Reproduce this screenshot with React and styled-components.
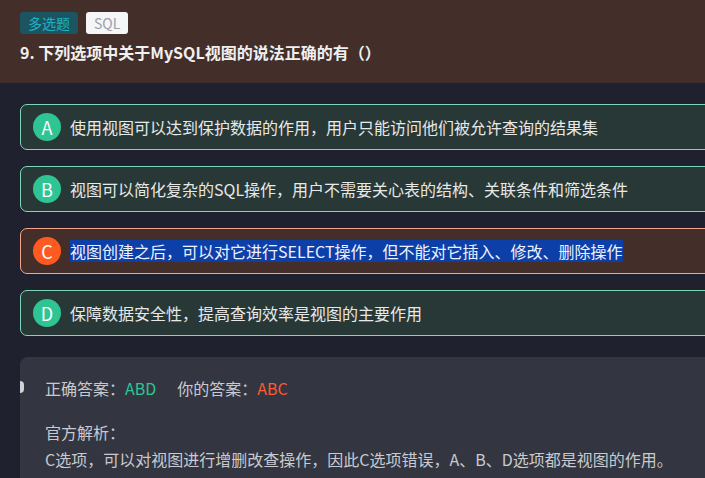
import React from "react";
import styled, { createGlobalStyle } from "styled-components";

const Global = createGlobalStyle`
  html, body { margin: 0; padding: 0; background: #1f222e; overflow: hidden; }
  body { font-family: "Noto Sans CJK SC", "Noto Sans", sans-serif; }
  ::selection { background: #0c3fa8; }
`;

const Page = styled.div`
  width: 100vw;
  height: 478px;
  overflow: hidden;
  background: #1f222e;
`;

const Header = styled.header`
  background: #432e2a;
  height: 83px;
  box-sizing: border-box;
  padding: 12px 20px 0;
`;

const Tags = styled.div`
  display: flex;
  gap: 8px;
`;

const Tag = styled.span`
  display: inline-flex;
  align-items: center;
  height: 22px;
  padding: 0 8px;
  border-radius: 3px;
  font-size: 14px;
  background: ${(p) => (p.$light ? "#f4f6f8" : "#1c5460")};
  color: ${(p) => (p.$light ? "#9ba1a8" : "#1fb2c2")};
`;

const Title = styled.h1`
  margin: 5px 0 0;
  font-size: 16px;
  line-height: 26px;
  font-weight: 700;
  color: #f0f0f0;
`;

const Body = styled.main`
  padding: 21px 0 0 20px;
  width: 740px;
`;

const Options = styled.div`
  display: flex;
  flex-direction: column;
  gap: 16px;
`;

const Option = styled.div`
  display: flex;
  align-items: center;
  gap: 9px;
  height: 46px;
  box-sizing: border-box;
  padding: 0 11px 0 12px;
  border-radius: 7px;
  border: 1px solid ${(p) => (p.$wrong ? "#f3a58b" : "#7fd6b7")};
  background: ${(p) => (p.$wrong ? "#432e2a" : "#283836")};
`;

const Letter = styled.span`
  width: 28px;
  height: 28px;
  border-radius: 50%;
  flex: none;
  display: flex;
  align-items: center;
  justify-content: center;
  font-size: 18px;
  color: #fff;
  background: ${(p) => (p.$wrong ? "#ff5a1f" : "#2ec493")};
`;

const OptionText = styled.span`
  font-size: 16px;
  color: #e8e8e8;
  white-space: nowrap;
`;

const Selected = styled.span`
  background: #0c3fa8;
  color: #eef2ff;
  line-height: 22px;
  display: inline-block;
`;

const Answer = styled.section`
  position: relative;
  margin-top: 21px;
  background: #333641;
  border-radius: 8px;
  padding: 18px 25px 20px;
  height: 140px;
  font-size: 16px;
  color: #c9cacf;
`;

const Nub = styled.span`
  position: absolute;
  left: 0;
  top: 24px;
  width: 4px;
  height: 12px;
  border-radius: 0 6px 6px 0;
  background: #d0d2d6;
`;

const AnswerRow = styled.div`
  display: flex;
  gap: 21px;
  line-height: 26px;
`;

const Key = styled.span`
  color: ${(p) => (p.$wrong ? "#ff5a30" : "#2ec493")};
`;

const Label = styled.div`
  margin-top: 18px;
  line-height: 27px;
`;

const Explain = styled.div`
  line-height: 27px;
  white-space: nowrap;
`;

const options = [
  { k: "A", t: "使用视图可以达到保护数据的作用，用户只能访问他们被允许查询的结果集" },
  { k: "B", t: "视图可以简化复杂的SQL操作，用户不需要关心表的结构、关联条件和筛选条件" },
  { k: "C", t: "视图创建之后，可以对它进行SELECT操作，但不能对它插入、修改、删除操作", wrong: true },
  { k: "D", t: "保障数据安全性，提高查询效率是视图的主要作用" },
];

export default function App() {
  return (
    <Page>
      <Global />
      <Header>
        <Tags>
          <Tag>多选题</Tag>
          <Tag $light>SQL</Tag>
        </Tags>
        <Title>9. 下列选项中关于MySQL视图的说法正确的有（）</Title>
      </Header>
      <Body>
        <Options>
          {options.map((o) => (
            <Option key={o.k} $wrong={o.wrong}>
              <Letter $wrong={o.wrong}>{o.k}</Letter>
              <OptionText>{o.wrong ? <Selected>{o.t}</Selected> : o.t}</OptionText>
            </Option>
          ))}
        </Options>
        <Answer>
          <Nub />
          <AnswerRow>
            <span>
              正确答案：<Key>ABD</Key>
            </span>
            <span>
              你的答案：<Key $wrong>ABC</Key>
            </span>
          </AnswerRow>
          <Label>官方解析：</Label>
          <Explain>C选项，可以对视图进行增删改查操作，因此C选项错误，A、B、D选项都是视图的作用。</Explain>
        </Answer>
      </Body>
    </Page>
  );
}
